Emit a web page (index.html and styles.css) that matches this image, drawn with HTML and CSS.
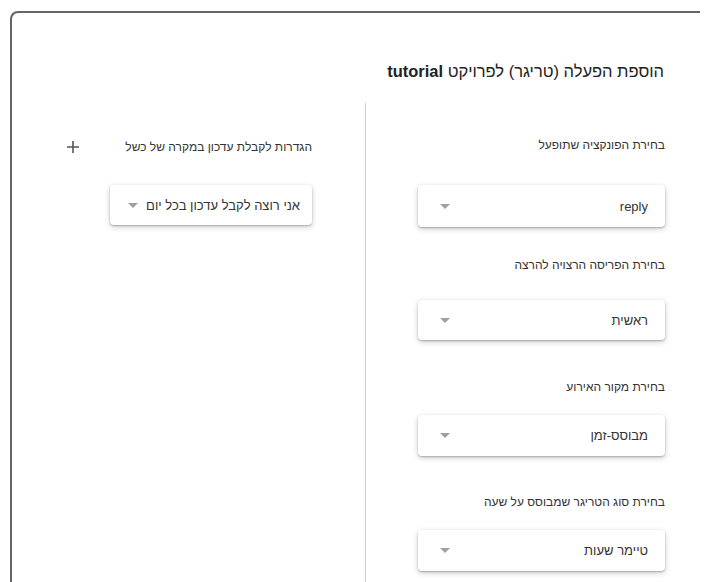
FILE: index.html
```html
<!DOCTYPE html>
<html lang="he">
<head>
<meta charset="utf-8">
<title>הוספת הפעלה</title>
<link rel="stylesheet" href="styles.css">
</head>
<body>
<div class="dialog" dir="rtl">
  <h1 class="title">הוספת הפעלה (טריגר) לפרויקט <b>tutorial</b></h1>
  <div class="columns">
    <div class="col col-main">
      <div class="field f1">
        <div class="label">בחירת הפונקציה שתופעל</div>
        <div class="select wide"><span class="val" dir="ltr">reply</span><span class="arrow"></span></div>
      </div>
      <div class="field f2">
        <div class="label">בחירת הפריסה הרצויה להרצה</div>
        <div class="select wide"><span class="val">ראשית</span><span class="arrow"></span></div>
      </div>
      <div class="field f3">
        <div class="label">בחירת מקור האירוע</div>
        <div class="select wide"><span class="val">מבוסס-זמן</span><span class="arrow"></span></div>
      </div>
      <div class="field f4">
        <div class="label">בחירת סוג הטריגר שמבוסס על שעה</div>
        <div class="select wide"><span class="val">טיימר שעות</span><span class="arrow"></span></div>
      </div>
    </div>
    <div class="col col-side">
      <div class="side-head">
        <div class="label">הגדרות לקבלת עדכון במקרה של כשל</div>
        <svg class="plus" width="14" height="14" viewBox="0 0 14 14"><path d="M7 1v12M1 7h12" stroke="#555" stroke-width="1.6" fill="none"/></svg>
      </div>
      <div class="select compact"><span class="val">אני רוצה לקבל עדכון בכל יום</span><span class="arrow"></span></div>
    </div>
  </div>
</div>
</body>
</html>
```
FILE: styles.css
```css
html, body {
  margin: 0;
  padding: 0;
  background: #fff;
  height: 100%;
  overflow: hidden;
}
body {
  padding-top: 11px;
  font-family: "Liberation Sans", "DejaVu Sans", Arial, sans-serif;
  color: #202124;
}
.dialog {
  margin-left: 10px;
  width: 690px;
  height: 600px;
  box-sizing: border-box;
  border-top: 2px solid #666;
  border-left: 2px solid #666;
  border-top-left-radius: 8px;
  display: flex;
  flex-direction: column;
}
.title {
  margin: 0;
  padding: 47px 36px 0 0;
  height: 43px;
  font-size: 16.5px;
  font-weight: normal;
  line-height: 22px;
  color: #222;
}
.title b {
  font-weight: bold;
}
.columns {
  display: flex;
  flex: 1;
}
.col-main {
  width: 334px;
  box-sizing: border-box;
  padding: 34px 35px 0 52px;
}
.col-side {
  flex: 1;
  border-right: 1px solid #d0d0d0;
  padding: 36px 53px 0 54px;
}
.label {
  font-size: 12px;
  line-height: 16px;
  color: #333;
}
.select {
  background: #fff;
  border-radius: 4px;
  box-shadow: 0 1px 2px rgba(0,0,0,0.25), 0 2px 6px rgba(0,0,0,0.18);
  display: flex;
  align-items: center;
  font-size: 13px;
  color: #333;
}
.select.wide {
  height: 41px;
  padding: 0 17px 0 22px;
  justify-content: space-between;
}
.select .arrow {
  width: 0;
  height: 0;
  border-left: 5px solid transparent;
  border-right: 5px solid transparent;
  border-top: 5px solid #a0a0a0;
}
.f1 .select { margin-top: 32px; height: 42px; }
.f2 { margin-top: 30px; }
.f2 .select { margin-top: 27px; height: 40px; }
.f3 { margin-top: 39px; }
.f3 .select { margin-top: 20px; }
.f4 { margin-top: 38px; }
.f4 .select { margin-top: 20px; }
.side-head {
  display: flex;
  justify-content: space-between;
  align-items: center;
}
.plus {
  display: block;
}
.select.compact {
  display: inline-flex;
  margin-top: 30px;
  height: 40px;
  padding: 0 12px 0 18px;
  gap: 8px;
}
.col-side .select.compact {
  float: right;
}
```
